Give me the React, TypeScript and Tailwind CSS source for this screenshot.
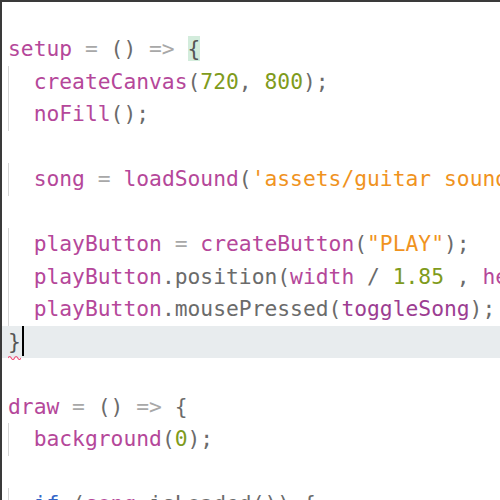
type Tok = [string, string];

const P = "text-[#b5479a]"; // identifiers
const G = "text-[#6b6b6b]"; // punctuation
const O = "text-[#a8a8a8]"; // operators
const N = "text-[#7f9b1c]"; // numbers
const S = "text-[#f0931e]"; // strings
const B = "text-[#3566c8]"; // keywords

const lines: { indent: boolean; toks: Tok[]; active?: boolean }[] = [
  {
    indent: false,
    toks: [
      [P, "setup"],
      [O, " = "],
      [G, "() "],
      [O, "=>"],
      [G, " "],
      ["text-[#555] bg-[#d3ecdc]", "{"],
    ],
  },
  {
    indent: true,
    toks: [
      [P, "createCanvas"],
      [G, "("],
      [N, "720"],
      [G, ", "],
      [N, "800"],
      [G, ");"],
    ],
  },
  { indent: true, toks: [[P, "noFill"], [G, "();"]] },
  { indent: false, toks: [] },
  {
    indent: true,
    toks: [
      [P, "song"],
      [O, " = "],
      [P, "loadSound"],
      [G, "("],
      [S, "'assets/guitar sound.mp3'"],
      [G, ");"],
    ],
  },
  { indent: false, toks: [] },
  {
    indent: true,
    toks: [
      [P, "playButton"],
      [O, " = "],
      [P, "createButton"],
      [G, "("],
      [S, '"PLAY"'],
      [G, ");"],
    ],
  },
  {
    indent: true,
    toks: [
      [P, "playButton"],
      [G, ".position("],
      [P, "width"],
      [G, " / "],
      [N, "1.85"],
      [G, " , "],
      [P, "height"],
      [G, " / "],
      [N, "2"],
      [G, ");"],
    ],
  },
  {
    indent: true,
    toks: [
      [P, "playButton"],
      [G, ".mousePressed("],
      ["text-[#9c3d92]", "toggleSong"],
      [G, ");"],
    ],
  },
  { indent: false, toks: [], active: true },
  { indent: false, toks: [] },
  {
    indent: false,
    toks: [
      [P, "draw"],
      [O, " = "],
      [G, "() "],
      [O, "=>"],
      [G, " {"],
    ],
  },
  {
    indent: true,
    toks: [[P, "background"], [G, "("], [N, "0"], [G, ");"]],
  },
  { indent: false, toks: [] },
  {
    indent: true,
    toks: [
      [B, "if"],
      [G, " ("],
      [P, "song"],
      [G, ".isLoaded()) {"],
    ],
  },
];

export default function App() {
  return (
    <div className="w-[500px] h-[500px] overflow-hidden bg-white border-l-2 border-t-2 border-[#3a3a3a]">
      <div
        className="pt-[31px] text-[21.3px] leading-[32.5px] whitespace-pre"
        style={{ fontFamily: '"DejaVu Sans Mono", monospace' }}
      >
        {lines.map((l, i) => (
          <div
            key={i}
            className={
              "relative h-[32.5px] pl-[6px] " + (l.active ? "bg-[#e8ecee]" : "")
            }
          >
            {l.indent && (
              <div className="absolute left-[6px] top-0 bottom-0 w-px bg-[#d6d6d6]" />
            )}
            {l.active ? (
              <span className="relative">
                <span className="text-[#555]">{"}"}</span>
                <span className="absolute left-0 right-0 bottom-[-6px] h-[5px] text-[#f0507a]">
                  <svg width="13" height="5" viewBox="0 0 13 5" className="block">
                    <path
                      d="M0 3 Q1.6 0 3.25 3 T6.5 3 T9.75 3 T13 3"
                      fill="none"
                      stroke="currentColor"
                      strokeWidth="1.2"
                    />
                  </svg>
                </span>
                <span className="absolute right-[-3px] top-[-3px] w-[2px] h-[30px] bg-black" />
              </span>
            ) : (
              <>
                {l.indent && <span>{"  "}</span>}
                {l.toks.map(([c, t], j) => (
                  <span key={j} className={c}>
                    {t}
                  </span>
                ))}
              </>
            )}
          </div>
        ))}
      </div>
    </div>
  );
}
